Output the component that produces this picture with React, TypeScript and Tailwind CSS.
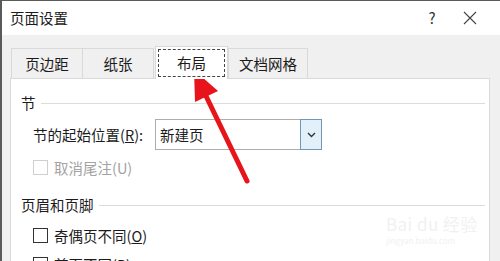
import React from 'react';

const font = { fontFamily: '"Noto Sans CJK SC", "Microsoft YaHei", sans-serif' };

const tabs = [
  { label: '页边距', w: 'w-[72px]' },
  { label: '纸张', w: 'w-[72px]' },
  { label: '布局', w: 'w-[73px]', active: true },
  { label: '文档网格', w: 'w-[80px]' },
];

function Checkbox({ disabled }: { disabled?: boolean }) {
  return (
    <span
      className={`w-[15px] h-[15px] border bg-white shrink-0 ${
        disabled ? 'border-[#cfcfcf]' : 'border-[#333]'
      }`}
    />
  );
}

function Group({ title, children }: { title: string; children: React.ReactNode }) {
  return (
    <div>
      <div className="flex items-center gap-[5px] h-[20px]">
        <span>{title}</span>
        <span className="flex-1 h-px bg-[#dcdcdc] mt-px" />
      </div>
      {children}
    </div>
  );
}

export default function App() {
  return (
    <div
      className="w-[500px] h-[261px] overflow-hidden relative border-t border-l-2 border-[#5a5a5a] bg-[#f0f0f0] text-[14.5px] text-[#1b1b1b] flex flex-col"
      style={font}
    >
      {/* title bar */}
      <div className="h-[34px] bg-white flex items-center pl-[8px] shrink-0">
        <span className="text-[14.5px]">页面设置</span>
        <span className="ml-auto w-[20px] text-center text-[15px] text-[#333]">?</span>
        <span className="w-[58px] flex justify-center pr-[2px]">
          <svg width="14" height="14" viewBox="0 0 14 14">
            <path d="M1 1L13 13M13 1L1 13" stroke="#444" strokeWidth="1.1" />
          </svg>
        </span>
      </div>

      {/* body */}
      <div className="flex-1 flex flex-col pl-[8px] pr-[8px] pt-[10px]">
        <div className="flex items-end h-[33px] pl-px">
          {tabs.map((t) =>
            t.active ? (
              <div
                key={t.label}
                className={`${t.w} h-[33px] bg-white border border-b-0 border-[#d9d9d9] -mb-px relative z-10 flex items-center justify-center p-[2px] mx-[1px]`}
              >
                <div className="w-full h-full border border-dashed border-[#444] flex items-center justify-center">
                  布局
                </div>
              </div>
            ) : (
              <div
                key={t.label}
                className={`${t.w} h-[30px] bg-[#f0f0f0] border border-b-0 border-[#d9d9d9] -ml-px first:ml-0 flex items-center justify-center`}
              >
                {t.label}
              </div>
            )
          )}
        </div>
        <div className="flex-1 bg-white border border-[#d9d9d9] mr-[2px] pl-[10px] pr-[4px] pt-[14px]">
          <Group title="节">
            <div className="flex items-center mt-[6px] pl-[12px]">
              <span className="w-[122px]">
                节的起始位置(<span className="underline">R</span>):
              </span>
              <div className="w-[167px] h-[31px] border border-[#adadad] flex items-center">
                <span className="flex-1 pl-[4px]">新建页</span>
                <span className="w-[22px] h-[31px] -mr-px -my-px border border-[#6e98b5] bg-[#e3f0f9] flex items-center justify-center">
                  <svg width="9" height="6" viewBox="0 0 9 6">
                    <path d="M1 1L4.5 4.5L8 1" stroke="#333" strokeWidth="1.4" fill="none" />
                  </svg>
                </span>
              </div>
            </div>
            <div className="flex items-center gap-[6px] mt-[7px] pl-[12px] text-[#a3a3a3]">
              <Checkbox disabled />
              <span>取消尾注(U)</span>
            </div>
          </Group>
          <div className="mt-[16px]">
            <Group title="页眉和页脚">
              <div className="flex items-center gap-[6px] mt-[10px] pl-[12px]">
                <Checkbox />
                <span>
                  奇偶页不同(<span className="underline">O</span>)
                </span>
              </div>
              <div className="flex items-center gap-[6px] mt-[7px] pl-[12px]">
                <Checkbox />
                <span>
                  首页不同(<span className="underline">P</span>)
                </span>
              </div>
            </Group>
          </div>
        </div>
      </div>

      {/* faint watermark */}
      <div className="absolute left-[384px] top-[214px] text-[#f1f1f1] leading-none pointer-events-none">
        <div className="text-[17px] tracking-wide">Bai du 经验</div>
        <div className="text-[8px] mt-[5px]">jingyan.baidu.com</div>
      </div>

      {/* red annotation arrow */}
      <svg className="absolute left-0 top-0 pointer-events-none" width="500" height="261" viewBox="0 0 500 261">
        <line x1="245" y1="180" x2="204" y2="95" stroke="#e8141b" strokeWidth="5" strokeLinecap="round" />
        <polygon points="192,69 216,90 193,101" fill="#e8141b" />
      </svg>
    </div>
  );
}
